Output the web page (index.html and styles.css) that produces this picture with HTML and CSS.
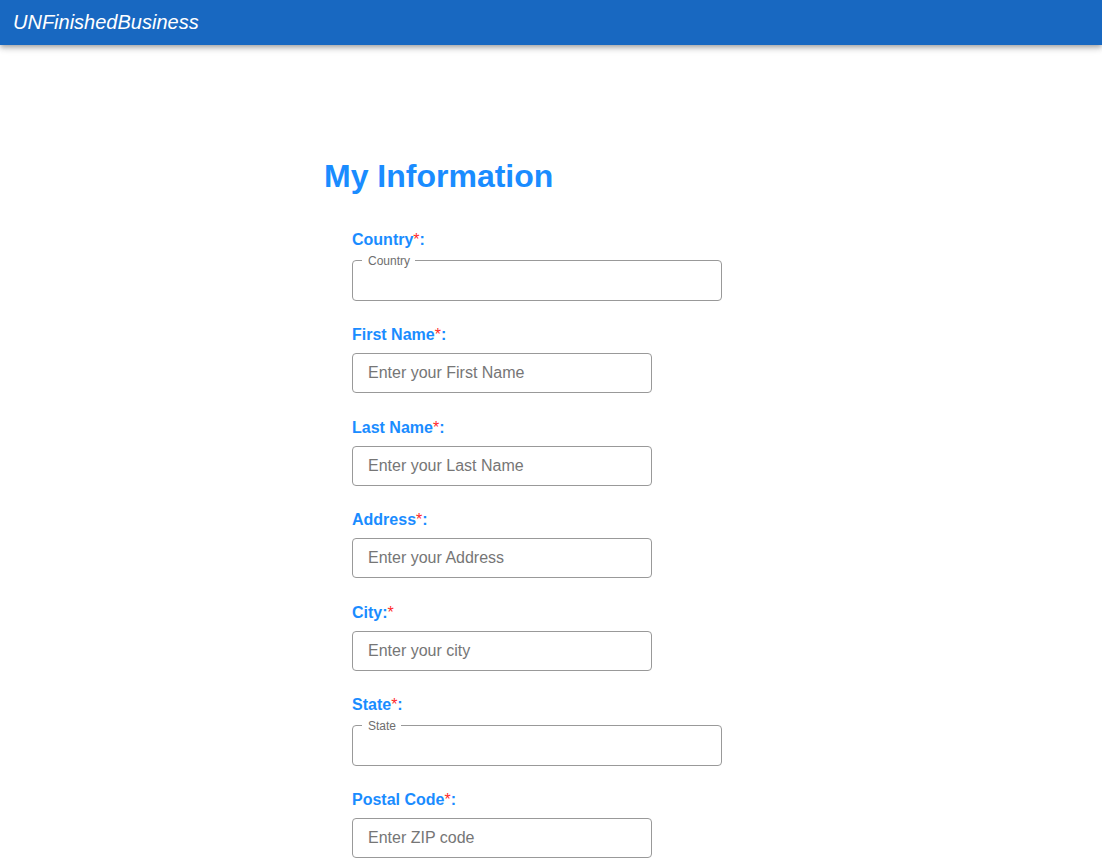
FILE: index.html
```html
<!DOCTYPE html>
<html lang="en">
<head>
<meta charset="utf-8">
<title>My Information</title>
<link rel="stylesheet" href="styles.css">
</head>
<body>
<header class="appbar">
  <div class="brand">UNFinishedBusiness</div>
</header>
<main class="page">
  <h1 class="title">My Information</h1>
  <form class="form">
    <div class="field field-outlined">
      <label class="label">Country<span class="req">*</span>:</label>
      <fieldset class="select-box wide">
        <legend class="legend">Country</legend>
      </fieldset>
    </div>
    <div class="field">
      <label class="label">First Name<span class="req">*</span>:</label>
      <input class="text-input" type="text" placeholder="Enter your First Name">
    </div>
    <div class="field">
      <label class="label">Last Name<span class="req">*</span>:</label>
      <input class="text-input" type="text" placeholder="Enter your Last Name">
    </div>
    <div class="field">
      <label class="label">Address<span class="req">*</span>:</label>
      <input class="text-input" type="text" placeholder="Enter your Address">
    </div>
    <div class="field">
      <label class="label">City:<span class="req">*</span></label>
      <input class="text-input" type="text" placeholder="Enter your city">
    </div>
    <div class="field field-outlined">
      <label class="label">State<span class="req">*</span>:</label>
      <fieldset class="select-box wide">
        <legend class="legend">State</legend>
      </fieldset>
    </div>
    <div class="field">
      <label class="label">Postal Code<span class="req">*</span>:</label>
      <input class="text-input" type="text" placeholder="Enter ZIP code">
    </div>
  </form>
</main>
</body>
</html>
```
FILE: styles.css
```css
html, body {
  margin: 0;
  padding: 0;
  background: #ffffff;
}

body {
  font-family: "Liberation Sans", Arial, sans-serif;
  color: #000;
}

.appbar {
  height: 45px;
  background: #1868c1;
  display: flex;
  align-items: center;
  padding-left: 13px;
  box-shadow: 0 2px 4px -1px rgba(0,0,0,0.2), 0 4px 5px 0 rgba(0,0,0,0.14), 0 1px 10px 0 rgba(0,0,0,0.12);
  position: relative;
}

.brand {
  font-family: "Liberation Sans", Arial, sans-serif;
  font-style: italic;
  font-size: 20px;
  line-height: 23px;
  color: #ffffff;
  margin-top: -1px;
}

.page {
  max-width: 454px;
  margin: 0 auto;
  padding-top: 113px;
}

.title {
  margin: 0;
  font-size: 32px;
  line-height: 37px;
  font-weight: bold;
  color: #1a8cff;
}

.form {
  margin: 36px 0 0 28px;
  display: flex;
  flex-direction: column;
  gap: 25.5px;
}

.field {
  display: flex;
  flex-direction: column;
  align-items: flex-start;
}

.label {
  display: block;
  font-size: 16px;
  line-height: 18px;
  font-weight: bold;
  color: #1a8cff;
  margin-bottom: 9px;
}

.field-outlined .label {
  margin-bottom: 5.5px;
}

.req {
  color: #ff2a2a;
  font-weight: normal;
}

.text-input {
  box-sizing: border-box;
  width: 300px;
  height: 40px;
  margin: 0;
  padding: 0 15px;
  border: 1px solid #999999;
  border-radius: 4px;
  font-family: "Liberation Sans", Arial, sans-serif;
  font-size: 16px;
  color: #222;
  background: #fff;
  outline: none;
}

.text-input::placeholder {
  color: #767676;
  opacity: 1;
}

.select-box {
  box-sizing: border-box;
  margin: 0;
  padding: 0 9px;
  min-width: 0;
  height: 46px;
  border: 1px solid #999999;
  border-radius: 4px;
}

.wide {
  width: 370px;
}

.legend {
  padding: 0 5px 0 6px;
  font-family: "Liberation Sans", Arial, sans-serif;
  font-size: 12px;
  line-height: 12px;
  color: #6e6e6e;
}
```
